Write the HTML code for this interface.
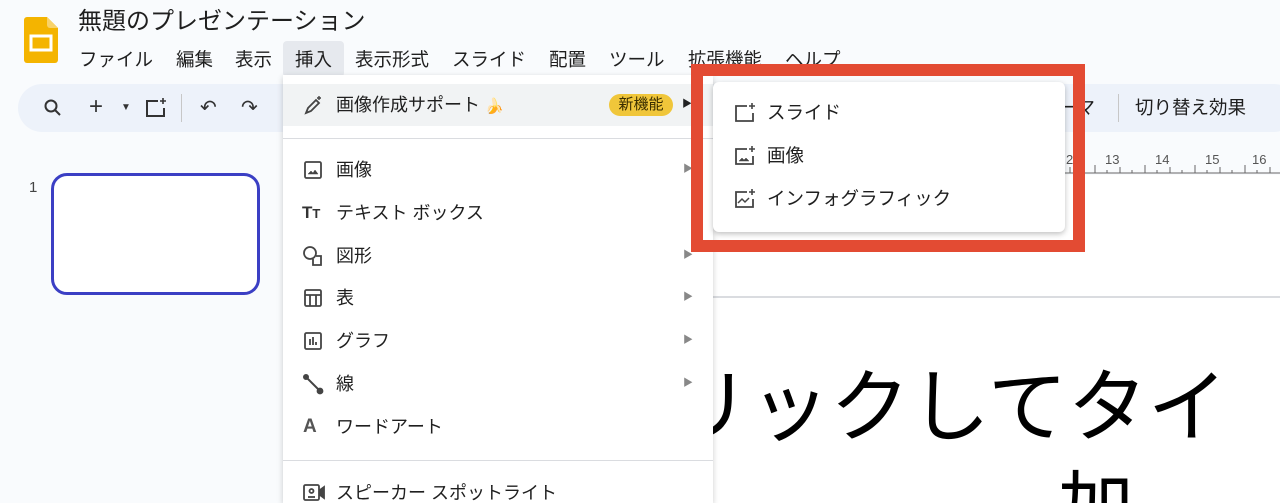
<!DOCTYPE html>
<html><head><meta charset="utf-8"><style>
*{margin:0;padding:0;box-sizing:border-box}
html,body{width:1280px;height:503px;overflow:hidden}
body{background:#f9fbfd;font-family:"Liberation Sans","Noto Sans CJK JP",sans-serif;color:#1f1f1f;position:relative}
.a{position:absolute;white-space:nowrap;line-height:20px}
.m{position:absolute;white-space:nowrap;line-height:20px;font-size:18.5px;top:50px}
.ic{position:absolute}
</style></head><body>
<svg class="ic" style="left:24px;top:17px" width="34" height="46" viewBox="0 0 34 46"><path d="M3 0h20l11 11v32a3 3 0 0 1-3 3H3a3 3 0 0 1-3-3V3a3 3 0 0 1 3-3z" fill="#f4b400"/><path d="M23 0l11 11H26a3 3 0 0 1-3-3z" fill="#f8d26a"/><rect x="7" y="19" width="20" height="14" fill="none" stroke="#fff" stroke-width="3"/></svg>
<div class="a" style="left:78px;top:10px;font-size:24px;line-height:24px">無題のプレゼンテーション</div>
<div class="a" style="left:283px;top:41px;width:61px;height:36px;background:#e6e9ee;border-radius:4px"></div>
<div class="m" style="left:79px">ファイル</div>
<div class="m" style="left:176px">編集</div>
<div class="m" style="left:235px">表示</div>
<div class="m" style="left:295px">挿入</div>
<div class="m" style="left:355px">表示形式</div>
<div class="m" style="left:452px">スライド</div>
<div class="m" style="left:549px">配置</div>
<div class="m" style="left:609px">ツール</div>
<div class="m" style="left:688px">拡張機能</div>
<div class="m" style="left:785px">ヘルプ</div>
<div class="a" style="left:18px;top:84px;width:1280px;height:48px;background:#edf2fa;border-radius:24px"></div>
<svg class="ic" style="left:42px;top:97px" width="22" height="22" viewBox="0 0 22 22" fill="none" stroke="#333" stroke-width="2"><circle cx="9" cy="9" r="5.5"/><path d="M13 13l5 5"/></svg>
<div class="a" style="left:89px;top:97px;font-size:24px;color:#333">+</div>
<div class="a" style="left:121px;top:98px;font-size:10px;color:#333">▼</div>
<svg class="ic" style="left:144px;top:97px" width="24" height="22" viewBox="0 0 24 22" fill="none" stroke="#333" stroke-width="2"><path d="M14 4H3v15h17v-8"/><path d="M19 1v6M16 4h6" stroke-width="1.6"/></svg>
<div class="a" style="left:181px;top:94px;width:1px;height:28px;background:#c7c7c7"></div>
<div class="a" style="left:200px;top:98px;font-size:20px;color:#333">↶</div>
<div class="a" style="left:241px;top:98px;font-size:20px;color:#333">↷</div>
<div class="a" style="left:1058px;top:98px;font-size:18.5px">ーマ</div>
<div class="a" style="left:1118px;top:94px;width:1px;height:28px;background:#c7c7c7"></div>
<div class="a" style="left:1135px;top:98px;font-size:18.5px">切り替え効果</div>
<div class="a" style="left:29px;top:178px;font-size:15px;color:#444">1</div>
<div class="a" style="left:51px;top:173px;width:209px;height:122px;border:3px solid #3b3fc4;border-radius:16px;background:#fff"></div>
<div class="a" style="left:1066px;top:150px;font-size:13px;color:#555">2</div>
<div class="a" style="left:1105px;top:150px;font-size:13px;color:#555">13</div>
<div class="a" style="left:1155px;top:150px;font-size:13px;color:#555">14</div>
<div class="a" style="left:1205px;top:150px;font-size:13px;color:#555">15</div>
<div class="a" style="left:1252px;top:150px;font-size:13px;color:#555">16</div>
<svg class="ic" style="left:1065px;top:160px" width="215" height="14"><g stroke="#666" stroke-width="1"><line x1="0" y1="13" x2="215" y2="13"/>
<line x1="5" y1="7" x2="5" y2="13"/><line x1="30" y1="5" x2="30" y2="13"/><line x1="55" y1="7" x2="55" y2="13"/><line x1="80" y1="5" x2="80" y2="13"/><line x1="105" y1="7" x2="105" y2="13"/><line x1="130" y1="5" x2="130" y2="13"/><line x1="155" y1="7" x2="155" y2="13"/><line x1="180" y1="5" x2="180" y2="13"/><line x1="205" y1="7" x2="205" y2="13"/>
<line x1="17" y1="10" x2="17" y2="13"/><line x1="42" y1="10" x2="42" y2="13"/><line x1="67" y1="10" x2="67" y2="13"/><line x1="92" y1="10" x2="92" y2="13"/><line x1="117" y1="10" x2="117" y2="13"/><line x1="142" y1="10" x2="142" y2="13"/><line x1="167" y1="10" x2="167" y2="13"/><line x1="192" y1="10" x2="192" y2="13"/></g></svg>
<div class="a" style="left:713px;top:175px;width:567px;height:122px;background:#fff"></div>
<div class="a" style="left:713px;top:296px;width:567px;height:2px;background:#dadce0"></div>
<div class="a" style="left:713px;top:298px;width:567px;height:205px;background:#fff"></div>
<div class="a" style="left:590px;top:368px;font-size:80px;line-height:80px;color:#000">クリックしてタイ</div>
<div class="a" style="left:1058px;top:470px;font-size:76px;line-height:76px;color:#000">加</div>
<!-- menu -->
<div class="a" style="left:283px;top:75px;width:430px;height:428px;background:#fff;box-shadow:0 2px 6px rgba(0,0,0,.2)"></div>
<div class="a" style="left:283px;top:84px;width:430px;height:42px;background:#f1f3f4"></div>
<svg class="ic" style="left:302px;top:94px" width="22" height="22" viewBox="0 0 22 22" fill="none" stroke="#444" stroke-width="1.8"><path d="M4 19l2-5 8-8 3 3-8 8z"/><path d="M17 2v4M15 4h4" stroke-width="1.4"/></svg>
<div class="a" style="left:336px;top:95px;font-size:18px">画像作成サポート <span style="font-size:15px">🍌</span></div>
<div class="a" style="left:609px;top:94px;width:64px;height:22px;background:#f0c63a;border-radius:11px;font-size:15px;text-align:center;line-height:22px;color:#3a2e00">新機能</div>
<div class="a" style="left:682px;top:95px;font-size:10px;color:#222">▶</div>
<div class="a" style="left:283px;top:138px;width:430px;height:1px;background:#dadce0"></div>
<div class="a" style="left:283px;top:460px;width:430px;height:1px;background:#dadce0"></div>
<svg class="ic" style="left:302px;top:159px" width="22" height="22" viewBox="0 0 22 22" fill="none" stroke="#444" stroke-width="1.8"><rect x="3" y="3" width="16" height="16" rx="1.5"/><path d="M6 15l3-3 2 2 2-3 3 4z" fill="#444" stroke-width="0.5"/></svg>
<div class="a" style="left:336px;top:160px;font-size:18px">画像</div>
<div class="a" style="left:302px;top:203px;font-size:17px;font-weight:bold;color:#333">T<span style="font-size:13px">T</span></div>
<div class="a" style="left:336px;top:203px;font-size:18px">テキスト ボックス</div>
<svg class="ic" style="left:302px;top:245px" width="22" height="22" viewBox="0 0 22 22" fill="none" stroke="#444" stroke-width="1.8"><circle cx="8" cy="8" r="6"/><path d="M11 14v6h8v-9h-5"/></svg>
<div class="a" style="left:336px;top:246px;font-size:18px">図形</div>
<svg class="ic" style="left:302px;top:287px" width="22" height="22" viewBox="0 0 22 22" fill="none" stroke="#444" stroke-width="1.8"><rect x="3" y="3" width="16" height="16" rx="1.5"/><path d="M3 8h16M8 8v11M14 8v11"/></svg>
<div class="a" style="left:336px;top:288px;font-size:18px">表</div>
<svg class="ic" style="left:302px;top:330px" width="22" height="22" viewBox="0 0 22 22" fill="none" stroke="#444" stroke-width="1.8"><rect x="3" y="3" width="16" height="16" rx="1.5"/><path d="M8 9v6M11 7v8M14 12v3"/></svg>
<div class="a" style="left:336px;top:331px;font-size:18px">グラフ</div>
<svg class="ic" style="left:302px;top:373px" width="22" height="22" viewBox="0 0 22 22" fill="#444" stroke="#444" stroke-width="2"><path d="M4 4l14 14"/><circle cx="4" cy="4" r="2"/><circle cx="18" cy="18" r="2.4"/></svg>
<div class="a" style="left:336px;top:374px;font-size:18px">線</div>
<div class="a" style="left:303px;top:417px;font-size:19px;font-weight:bold;color:#555">A</div>
<div class="a" style="left:336px;top:417px;font-size:18px">ワードアート</div>
<svg class="ic" style="left:302px;top:483px" width="24" height="20" viewBox="0 0 24 20" fill="none" stroke="#444" stroke-width="1.8"><rect x="2" y="2" width="15" height="15" rx="1.5"/><circle cx="9.5" cy="8" r="2"/><path d="M6 14h7"/><path d="M18 7l4-3v11l-4-3z" fill="#444"/></svg>
<div class="a" style="left:336px;top:483px;font-size:18px">スピーカー スポットライト</div>
<div class="a" style="left:683px;top:160px;font-size:10px;color:#888">▶</div>
<div class="a" style="left:683px;top:246px;font-size:10px;color:#888">▶</div>
<div class="a" style="left:683px;top:288px;font-size:10px;color:#888">▶</div>
<div class="a" style="left:683px;top:331px;font-size:10px;color:#888">▶</div>
<div class="a" style="left:683px;top:374px;font-size:10px;color:#888">▶</div>
<!-- submenu -->
<div class="a" style="left:713px;top:82px;width:352px;height:150px;background:#fff;border-radius:6px;box-shadow:0 2px 6px rgba(0,0,0,.25)"></div>
<svg class="ic" style="left:733px;top:102px" width="24" height="22" viewBox="0 0 24 22" fill="none" stroke="#444" stroke-width="1.8"><path d="M14 4H3v15h17v-8"/><path d="M19 1v6M16 4h6" stroke-width="1.6"/></svg>
<div class="a" style="left:767px;top:103px;font-size:18.5px">スライド</div>
<svg class="ic" style="left:733px;top:145px" width="24" height="22" viewBox="0 0 24 22" fill="none" stroke="#444" stroke-width="1.8"><path d="M14 4H3v15h17v-8"/><path d="M19 1v6M16 4h6" stroke-width="1.6"/><path d="M6 16l3-3 2 2 2-2 3 3z" fill="#444" stroke-width="0.5"/></svg>
<div class="a" style="left:767px;top:146px;font-size:18.5px">画像</div>
<svg class="ic" style="left:733px;top:188px" width="24" height="22" viewBox="0 0 24 22" fill="none" stroke="#444" stroke-width="1.8"><path d="M14 4H3v15h17v-8"/><path d="M19 1v6M16 4h6" stroke-width="1.6"/><path d="M5 15l4-4 3 3 4-4" stroke-width="1.5"/></svg>
<div class="a" style="left:767px;top:189px;font-size:18.5px">インフォグラフィック</div>
<div class="a" style="left:691px;top:64px;width:394px;height:188px;border:12px solid #e34b33"></div>
</body></html>
